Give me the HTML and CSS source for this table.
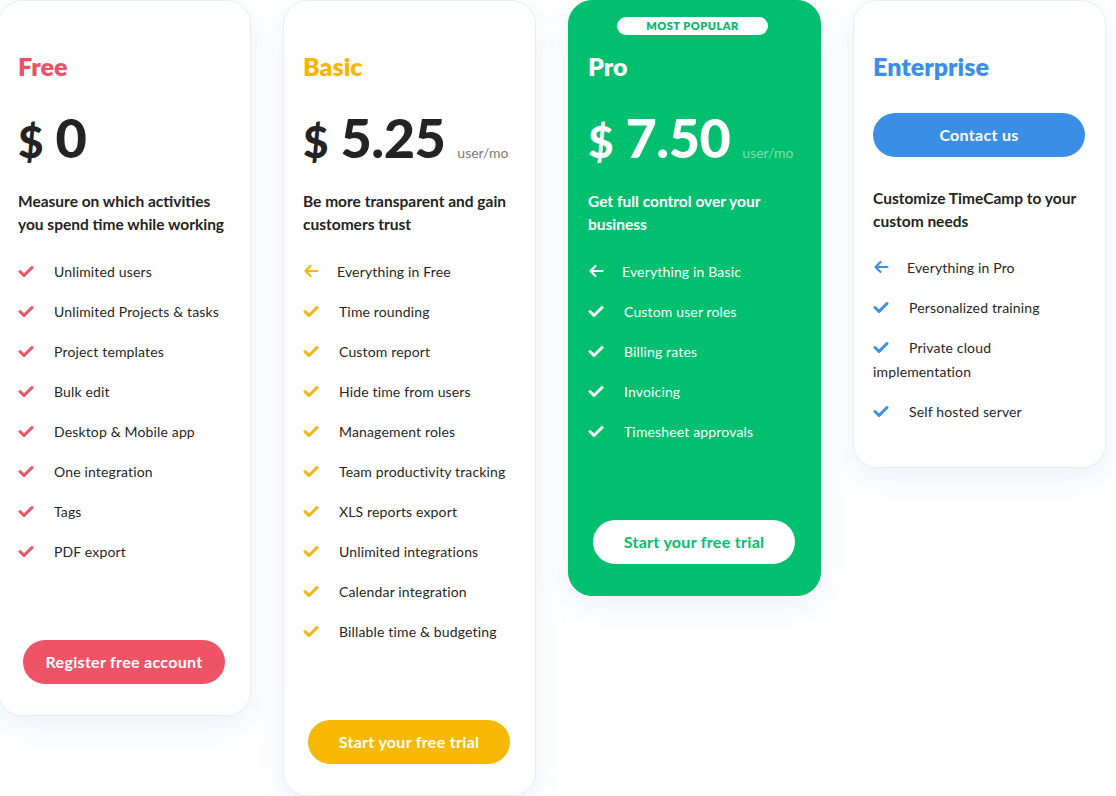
FILE: index.html
```html
<!DOCTYPE html>
<html lang="en">
<head>
<meta charset="utf-8">
<title>Pricing</title>
<link rel="stylesheet" href="styles.css">
</head>
<body>
<svg width="0" height="0" class="defs">
  <defs>
    <symbol id="check" viewBox="0 0 16 13"><polyline points="2,6.5 6,10.5 14,2.5" fill="none" stroke="currentColor" stroke-width="3" stroke-linecap="round" stroke-linejoin="round"/></symbol>
    <symbol id="arrow" viewBox="0 0 16 14"><path d="M14.5 7H2.5M7.5 2L2.5 7l5 5" fill="none" stroke="currentColor" stroke-width="2.2" stroke-linecap="round" stroke-linejoin="round"/></symbol>
  </defs>
</svg>
<main class="plans">
  <section class="card free">
    <h2 class="name">Free</h2>
    <div class="price"><span class="cur">$</span><span class="amt">0</span></div>
    <p class="desc">Measure on which activities you spend time while working</p>
    <ul class="feats">
      <li><svg class="ic"><use href="#check"/></svg>Unlimited users</li>
      <li><svg class="ic"><use href="#check"/></svg>Unlimited Projects &amp; tasks</li>
      <li><svg class="ic"><use href="#check"/></svg>Project templates</li>
      <li><svg class="ic"><use href="#check"/></svg>Bulk edit</li>
      <li><svg class="ic"><use href="#check"/></svg>Desktop &amp; Mobile app</li>
      <li><svg class="ic"><use href="#check"/></svg>One integration</li>
      <li><svg class="ic"><use href="#check"/></svg>Tags</li>
      <li><svg class="ic"><use href="#check"/></svg>PDF export</li>
    </ul>
    <a class="btn">Register free account</a>
  </section>

  <section class="card basic">
    <h2 class="name">Basic</h2>
    <div class="price"><span class="cur">$</span><span class="amt">5.25</span><span class="per">user/mo</span></div>
    <p class="desc">Be more transparent and gain customers trust</p>
    <ul class="feats">
      <li><svg class="ic arr"><use href="#arrow"/></svg>Everything in Free</li>
      <li><svg class="ic"><use href="#check"/></svg>Time rounding</li>
      <li><svg class="ic"><use href="#check"/></svg>Custom report</li>
      <li><svg class="ic"><use href="#check"/></svg>Hide time from users</li>
      <li><svg class="ic"><use href="#check"/></svg>Management roles</li>
      <li><svg class="ic"><use href="#check"/></svg>Team productivity tracking</li>
      <li><svg class="ic"><use href="#check"/></svg>XLS reports export</li>
      <li><svg class="ic"><use href="#check"/></svg>Unlimited integrations</li>
      <li><svg class="ic"><use href="#check"/></svg>Calendar integration</li>
      <li><svg class="ic"><use href="#check"/></svg>Billable time &amp; budgeting</li>
    </ul>
    <a class="btn">Start your free trial</a>
  </section>

  <section class="card pro">
    <span class="badge">MOST POPULAR</span>
    <h2 class="name">Pro</h2>
    <div class="price"><span class="cur">$</span><span class="amt">7.50</span><span class="per">user/mo</span></div>
    <p class="desc">Get full control over your business</p>
    <ul class="feats">
      <li><svg class="ic arr"><use href="#arrow"/></svg>Everything in Basic</li>
      <li><svg class="ic"><use href="#check"/></svg>Custom user roles</li>
      <li><svg class="ic"><use href="#check"/></svg>Billing rates</li>
      <li><svg class="ic"><use href="#check"/></svg>Invoicing</li>
      <li><svg class="ic"><use href="#check"/></svg>Timesheet approvals</li>
    </ul>
    <a class="btn">Start your free trial</a>
  </section>

  <section class="card ent">
    <h2 class="name">Enterprise</h2>
    <a class="btn wide">Contact us</a>
    <p class="desc">Customize TimeCamp to your custom needs</p>
    <ul class="feats">
      <li><svg class="ic arr"><use href="#arrow"/></svg>Everything in Pro</li>
      <li><svg class="ic"><use href="#check"/></svg>Personalized training</li>
      <li><svg class="ic"><use href="#check"/></svg>Private cloud implementation</li>
      <li><svg class="ic"><use href="#check"/></svg>Self hosted server</li>
    </ul>
  </section>
</main>
</body>
</html>
```

FILE: styles.css
```css
* { box-sizing: border-box; }
html, body { margin: 0; padding: 0; background: #ffffff; }
body {
  font-family: "Lato", "Noto Sans", sans-serif;
  color: #232323;
  overflow: hidden;
  height: 796px;
}
.defs { position: absolute; }

.plans {
  display: flex;
  align-items: flex-start;
  gap: 32px;
  margin-left: -2px;
}

.card {
  position: relative;
  width: 253px;
  flex: none;
  background: #fff;
  border: 1px solid #e9edf4;
  border-radius: 24px;
  padding: 49px 20px 31px 19px;
  box-shadow: 0 10px 28px rgba(170, 188, 230, 0.22);
  display: flex;
  flex-direction: column;
}

.name {
  margin: 0;
  font-size: 25px;
  line-height: 32px;
  font-weight: 800;
}

.price {
  margin-top: 26px;
  height: 60px;
  display: flex;
  align-items: baseline;
  line-height: 60px;
  white-space: nowrap;
}
.cur { font-size: 44px; font-weight: 900; margin-right: 12px; }
.amt { font-size: 54px; font-weight: 900; letter-spacing: -0.5px; }
.per { font-size: 14px; color: #7a7a7a; margin-left: 12px; }

.desc {
  margin: 22px 0 0;
  font-size: 15.5px;
  line-height: 23px;
  font-weight: 700;
}

.feats {
  list-style: none;
  margin: 24px 0 0;
  padding: 0;
}
.feats li {
  font-size: 14px;
  line-height: 24px;
  margin-bottom: 16px;
  color: #262626;
  letter-spacing: 0.15px;
}
.feats li:last-child { margin-bottom: 0; }
.ic {
  display: inline-block;
  width: 16px;
  height: 13px;
  margin-right: 20px;
  vertical-align: -1px;
}
.ic.arr { width: 16px; height: 14px; margin-right: 18px; vertical-align: -1px; }

.btn {
  display: block;
  width: 202px;
  height: 44px;
  margin: 76px auto 0;
  border-radius: 22px;
  color: #fff;
  font-size: 16px;
  font-weight: 700;
  letter-spacing: 0.3px;
  line-height: 44px;
  text-align: center;
}

/* Free */
.free .name, .free .ic { color: #ef5066; }
.free .btn { background: #ef5366; }

/* Basic */
.basic .name, .basic .ic { color: #f8b500; }
.basic .btn { background: #f7b801; }

/* Pro */
.pro {
  background: #00bf6f;
  border-color: #00bf6f;
  color: #fff;
}
.pro .name, .pro .desc, .pro .feats li, .pro .ic { color: #fff; }
.pro .per { color: rgba(255, 255, 255, 0.5); }
.pro .btn { background: #fff; color: #00bf6f; }
.badge {
  position: absolute;
  top: 16px;
  left: 48px;
  width: 151px;
  height: 18px;
  border-radius: 9px;
  background: #fff;
  color: #00b96b;
  font-size: 11px;
  font-weight: 800;
  letter-spacing: 0.5px;
  line-height: 18px;
  text-align: center;
}

/* Enterprise */
.ent { padding-bottom: 43px; }
.ent .name, .ent .ic { color: #3b8ee6; }
.ent .btn.wide {
  width: 100%;
  margin: 31px 0 0;
  background: #3b8ee6;
}
.ent .desc { margin-top: 30px; }
.ent .feats { margin-top: 23px; }
```
